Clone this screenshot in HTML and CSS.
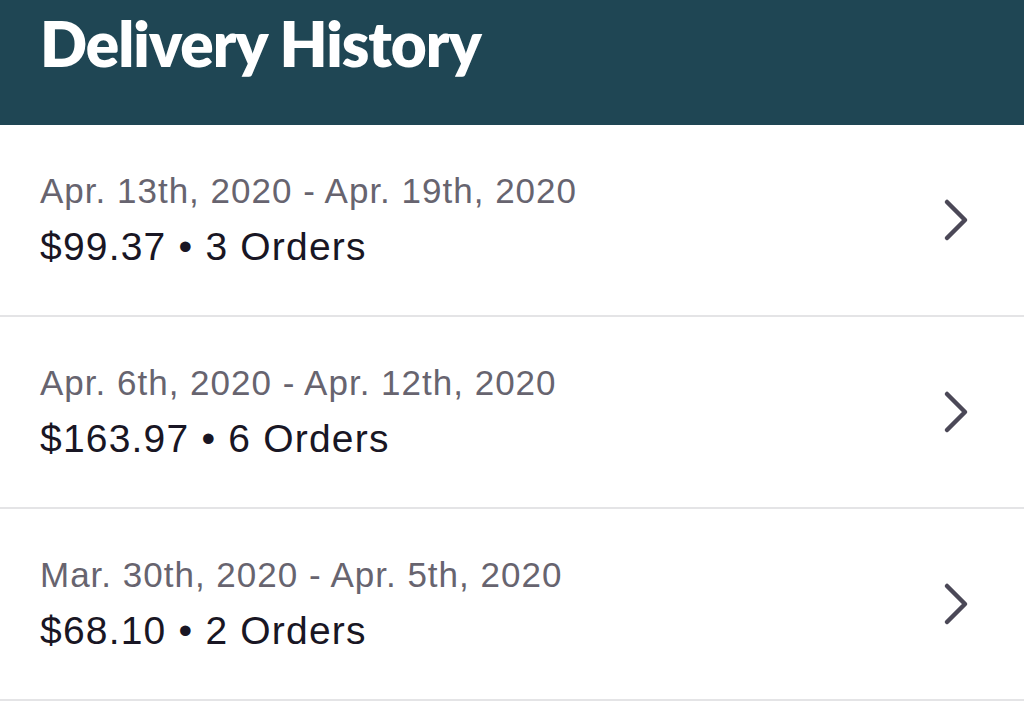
FILE: index.html
```html
<!DOCTYPE html>
<html lang="en">
<head>
    <meta charset="UTF-8">
    <meta name="viewport" content="width=device-width, initial-scale=1.0">
    <title>Delivery History</title>
    <link rel="stylesheet" href="styles.css">
</head>
<body>
    <div class="top-bar">
        <h1 class="title">Delivery History</h1>
    </div>
    <div class="history-list">
        <a class="week-row" href="#">
            <div class="week-info">
                <div class="week-dates">Apr. 13th, 2020 - Apr. 19th, 2020</div>
                <div class="week-total">$99.37 • 3 Orders</div>
            </div>
            <svg class="chevron" width="30" height="44" viewBox="0 0 30 44"><path d="M5 4 L23 22 L5 40" /></svg>
        </a>
        <a class="week-row" href="#">
            <div class="week-info">
                <div class="week-dates">Apr. 6th, 2020 - Apr. 12th, 2020</div>
                <div class="week-total">$163.97 • 6 Orders</div>
            </div>
            <svg class="chevron" width="30" height="44" viewBox="0 0 30 44"><path d="M5 4 L23 22 L5 40" /></svg>
        </a>
        <a class="week-row" href="#">
            <div class="week-info">
                <div class="week-dates">Mar. 30th, 2020 - Apr. 5th, 2020</div>
                <div class="week-total">$68.10 • 2 Orders</div>
            </div>
            <svg class="chevron" width="30" height="44" viewBox="0 0 30 44"><path d="M5 4 L23 22 L5 40" /></svg>
        </a>
    </div>
</body>
</html>
```

FILE: styles.css
```css
body {
    font-family: "Liberation Sans", Arial, sans-serif;
    margin: 0;
    padding: 0;
    background-color: white;
}
.top-bar {
    background-color: #1f4654;
    color: white;
    height: 125px;
    box-sizing: border-box;
    padding: 12px 40px 0;
}
.title {
    margin: 0;
    font-family: Lato, "Liberation Sans", sans-serif;
    font-weight: 800;
    font-size: 62px;
    line-height: 62px;
    letter-spacing: -1px;
}
.week-row {
    display: flex;
    align-items: center;
    justify-content: space-between;
    height: 192px;
    box-sizing: border-box;
    padding: 0 52px 0 40px;
    border-bottom: 2px solid #e4e4e6;
    text-decoration: none;
}
.week-dates {
    font-size: 35px;
    line-height: 40px;
    letter-spacing: 1px;
    color: #67646f;
    margin-bottom: 14px;
}
.week-total {
    font-size: 39px;
    line-height: 44px;
    letter-spacing: 1.2px;
    color: #191624;
}
.chevron path {
    fill: none;
    stroke: #4b4857;
    stroke-width: 4.5;
    stroke-linecap: round;
    stroke-linejoin: round;
}
```
